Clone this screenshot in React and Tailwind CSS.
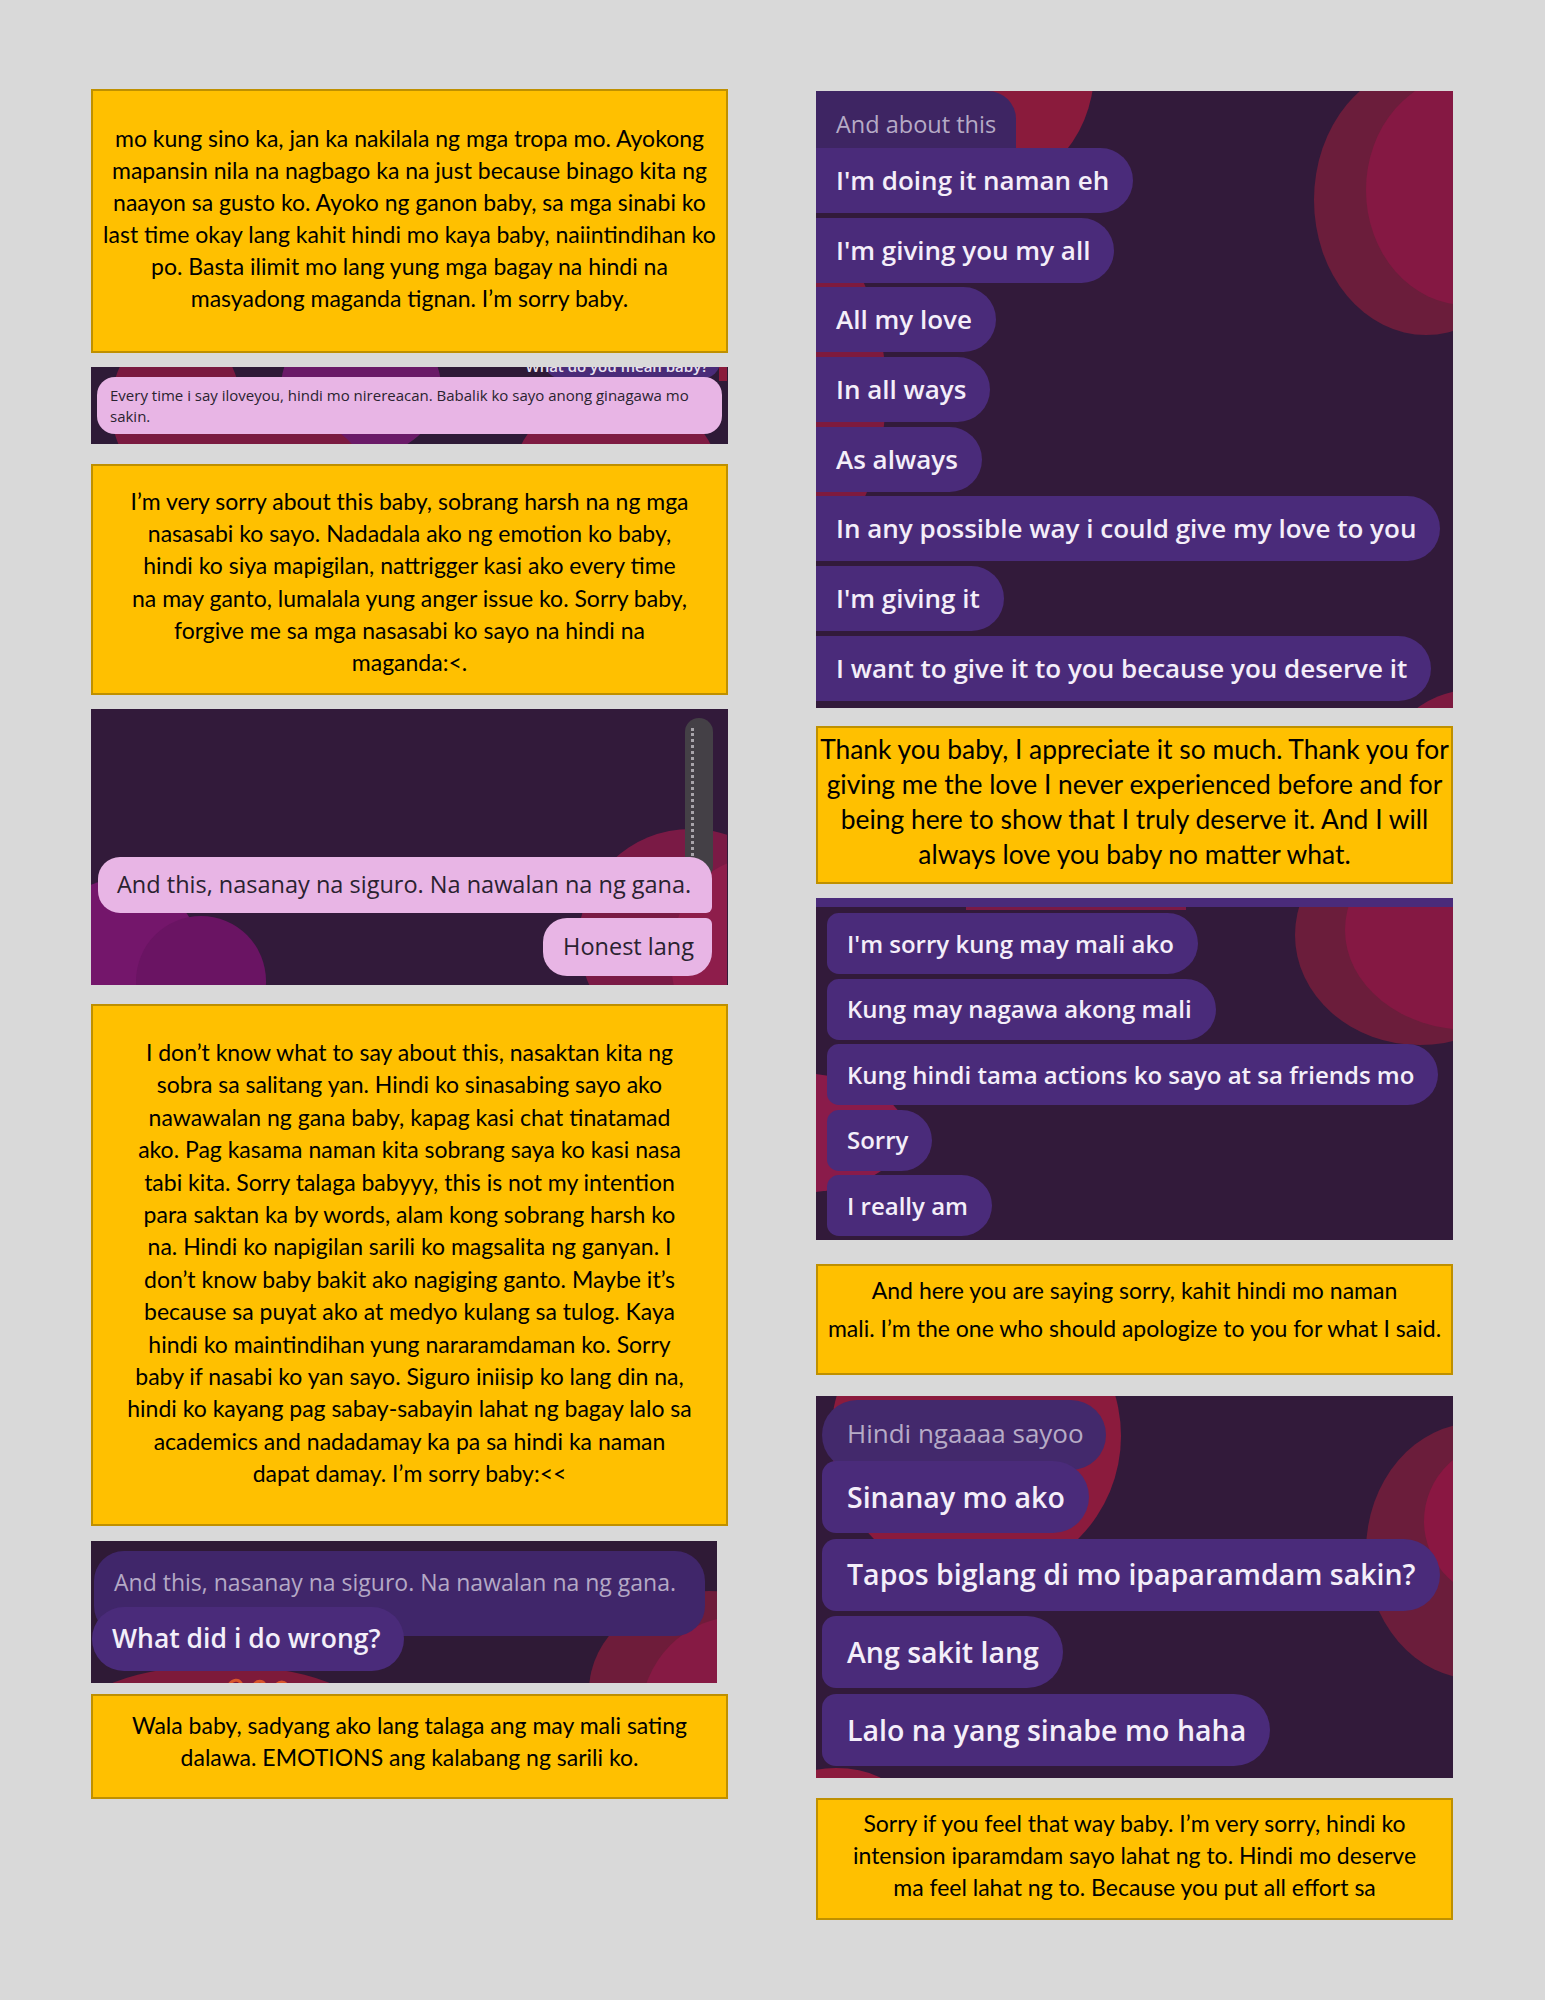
import React from "react";

const box1 = [
  "mo kung sino ka, jan ka nakilala ng mga tropa mo. Ayokong",
  "mapansin nila na nagbago ka na just because binago kita ng",
  "naayon sa gusto ko. Ayoko ng ganon baby, sa mga sinabi ko",
  "last time okay lang kahit hindi mo kaya baby, naiintindihan ko",
  "po. Basta ilimit mo lang yung mga bagay na hindi na",
  "masyadong maganda tignan. I’m sorry baby.",
];
const box2 = [
  "I’m very sorry about this baby, sobrang harsh na ng mga",
  "nasasabi ko sayo. Nadadala ako ng emotion ko baby,",
  "hindi ko siya mapigilan, nattrigger kasi ako every time",
  "na may ganto, lumalala yung anger issue ko. Sorry baby,",
  "forgive me sa mga nasasabi ko sayo na hindi na",
  "maganda:<.",
];
const box3 = [
  "I don’t know what to say about this, nasaktan kita ng",
  "sobra sa salitang yan. Hindi ko sinasabing sayo ako",
  "nawawalan ng gana baby, kapag kasi chat tinatamad",
  "ako. Pag kasama naman kita sobrang saya ko kasi nasa",
  "tabi kita. Sorry talaga babyyy, this is not my intention",
  "para saktan ka by words, alam kong sobrang harsh ko",
  "na. Hindi ko napigilan sarili ko magsalita ng ganyan. I",
  "don’t know baby bakit ako nagiging ganto. Maybe it’s",
  "because sa puyat ako at medyo kulang sa tulog. Kaya",
  "hindi ko maintindihan yung nararamdaman ko. Sorry",
  "baby if nasabi ko yan sayo. Siguro iniisip ko lang din na,",
  "hindi ko kayang pag sabay-sabayin lahat ng bagay lalo sa",
  "academics and nadadamay ka pa sa hindi ka naman",
  "dapat damay. I’m sorry baby:<<",
];
const box4 = [
  "Wala baby, sadyang ako lang talaga ang may mali sating",
  "dalawa. EMOTIONS ang kalabang ng sarili ko.",
];
const boxA = [
  "Thank you baby, I appreciate it so much. Thank you for",
  "giving me the love I never experienced before and for",
  "being here to show that I truly deserve it. And I will",
  "always love you baby no matter what.",
];
const boxB = [
  "And here you are saying sorry, kahit hindi mo naman",
  "mali. I’m the one who should apologize to you for what I said.",
];
const boxC = [
  "Sorry if you feel that way baby. I’m very sorry, hindi ko",
  "intension iparamdam sayo lahat ng to. Hindi mo deserve",
  "ma feel lahat ng to. Because you put all effort sa",
];

function Lines({ lines }) {
  return lines.map((l, i) => (
    <div key={i} className="whitespace-nowrap">
      {l}
    </div>
  ));
}

function Backdrop({ w, h, children }) {
  return (
    <svg
      className="pointer-events-none absolute inset-0"
      width={w}
      height={h}
      viewBox={`0 0 ${w} ${h}`}
      aria-hidden="true"
    >
      {children}
    </svg>
  );
}

const aBubbles = [
  "I'm doing it naman eh",
  "I'm giving you my all",
  "All my love",
  "In all ways",
  "As always",
  "In any possible way i could give my love to you",
  "I'm giving it",
  "I want to give it to you because you deserve it",
];
const bBubbles = [
  "I'm sorry kung may mali ako",
  "Kung may nagawa akong mali",
  "Kung hindi tama actions ko sayo at sa friends mo",
  "Sorry",
  "I really am",
];
const cBubbles = [
  "Sinanay mo ako",
  "Tapos biglang di mo ipaparamdam sakin?",
  "Ang sakit lang",
  "Lalo na yang sinabe mo haha",
];

export default function App() {
  return (
    <div className="min-h-[2000px] bg-[#d9d9d9] font-['Lato',sans-serif] text-black">
      <div className="flex gap-[88px] pl-[91px] pt-[89px]">
        {/* LEFT COLUMN */}
        <div className="flex w-[637px] flex-col">
          <div className="h-[264px] border-2 border-[#bf9000] bg-[#ffc000] pt-[31px] text-center text-[23px] leading-[32px]">
            <Lines lines={box1} />
          </div>

          {/* Screenshot 1 */}
          <div className="relative mt-[14px] h-[77px] overflow-hidden bg-[#2e1a37] font-['Open_Sans',sans-serif]">
            <Backdrop w={636} h={77}>
              <ellipse cx="85" cy="40" rx="65" ry="80" fill="#7a1a40" />
              <ellipse cx="270" cy="20" rx="80" ry="70" fill="#6a1a68" />
              <ellipse cx="150" cy="100" rx="120" ry="60" fill="#7a1a40" />
              <ellipse cx="525" cy="100" rx="100" ry="70" fill="#7e1b42" />
              <rect x="452" y="-30" width="178" height="42" rx="20" fill="#4a2b78" />
              <rect x="628" y="0" width="10" height="14" fill="#8a1b3c" />
            </Backdrop>
            <div className="relative flex h-full flex-col">
              <div className="flex h-[10px] items-end justify-end overflow-hidden pr-[20px] text-[15px] font-semibold leading-[10px] text-[#e9e2ef]">
                <span className="translate-y-[-6px]">What do you mean baby?</span>
              </div>
              <div className="mx-[6px] h-[57px] rounded-[18px] bg-[#e8b5e5] pl-[13px] pt-[8px] text-[15px] leading-[21px] text-[#2a2330]">
                Every time i say iloveyou, hindi mo nirereacan. Babalik ko sayo anong ginagawa mo
                <br />
                sakin.
              </div>
            </div>
          </div>

          <div className="mt-[20px] h-[231px] border-2 border-[#bf9000] bg-[#ffc000] pt-[19px] text-center text-[23px] leading-[32.2px]">
            <Lines lines={box2} />
          </div>

          {/* Screenshot 2 */}
          <div className="relative mt-[14px] h-[276px] overflow-hidden bg-[#321a3a] font-['Open_Sans',sans-serif]">
            <Backdrop w={636} h={276}>
              <circle cx="30" cy="250" r="80" fill="#74166b" />
              <circle cx="110" cy="272" r="65" fill="#6a1463" />
              <ellipse cx="600" cy="230" rx="112" ry="110" fill="#7a1a45" />
              <ellipse cx="660" cy="250" rx="80" ry="100" fill="#8e1d4b" />
            </Backdrop>
            <div className="relative flex h-full flex-col items-end pr-[16px] pt-[9px]">
              <div className="mr-[-1px] flex h-[162px] w-[28px] rounded-full bg-[#444046] pl-[6px] pt-[10px]">
                <div className="h-[140px] w-[4px] border-l-[3px] border-dotted border-[#a8a4aa]" />
              </div>
              <div className="mt-[-23px] flex h-[56px] w-[614px] items-center rounded-[22px] rounded-br-[6px] bg-[#e8b5e5] pl-[19px] text-[23.5px] text-[#2a2230]">
                And this, nasanay na siguro. Na nawalan na ng gana.
              </div>
              <div className="mt-[5px] flex h-[58px] items-center rounded-[24px] rounded-tr-[6px] bg-[#e8b5e5] pl-[20px] pr-[18px] text-[23.5px] text-[#2a2230]">
                Honest lang
              </div>
            </div>
          </div>

          <div className="mt-[19px] h-[522px] border-2 border-[#bf9000] bg-[#ffc000] pt-[30px] text-center text-[23px] leading-[32.4px]">
            <Lines lines={box3} />
          </div>

          {/* Screenshot 3 */}
          <div className="relative mt-[15px] h-[142px] w-[626px] overflow-hidden bg-[#2f1a36] font-['Open_Sans',sans-serif]">
            <Backdrop w={626} h={142}>
              <ellipse cx="130" cy="182" rx="150" ry="58" fill="#7d1a3a" />
              <path
                d="M135 150 C140 136 150 136 152 148 M160 150 C164 137 174 137 176 150 M182 150 C186 138 196 138 198 150"
                stroke="#d8552c"
                strokeWidth="3"
                fill="none"
              />
              <ellipse cx="618" cy="150" rx="120" ry="100" fill="#6e1c3a" />
              <ellipse cx="650" cy="175" rx="100" ry="100" fill="#861a44" />
            </Backdrop>
            <div className="relative flex flex-col">
              <div className="ml-[3px] mt-[10px] h-[85px] w-[611px] rounded-[30px] bg-[#40266a] pl-[20px] pt-[15px] text-[23px] leading-[32px] text-[#b4a9c6]">
                And this, nasanay na siguro. Na nawalan na ng gana.
              </div>
              <div className="ml-[1px] mt-[-29px] flex h-[64px] w-fit items-center rounded-[32px] bg-[#4a2b7a] pl-[20px] pr-[23px] text-[26.5px] font-semibold text-[#f3eef9]">
                What did i do wrong?
              </div>
            </div>
          </div>

          <div className="mt-[11px] h-[105px] border-2 border-[#bf9000] bg-[#ffc000] pt-[13px] text-center text-[23px] leading-[32px]">
            <Lines lines={box4} />
          </div>
        </div>

        {/* RIGHT COLUMN */}
        <div className="flex w-[637px] flex-col pt-[2px]">
          {/* Screenshot A */}
          <div className="relative h-[617px] overflow-hidden bg-[#321a3a] font-['Open_Sans',sans-serif]">
            <Backdrop w={637} h={617}>
              <circle cx="150" cy="-20" r="128" fill="#8a1b3c" />
              <ellipse cx="-40" cy="300" rx="110" ry="180" fill="#7e1a3e" />
              <ellipse cx="610" cy="109" rx="112" ry="135" fill="#6b1d3b" />
              <ellipse cx="650" cy="99" rx="100" ry="115" fill="#851843" />
              <circle cx="660" cy="698" r="100" fill="#7d1a40" />
            </Backdrop>
            <div className="relative flex flex-col">
              <div className="h-[57px] w-fit rounded-tr-[28px] bg-[#3e2563] pl-[20px] pr-[20px] pt-[18px] text-[23.5px] leading-[30px] text-[#b6abc6]">
                And about this
              </div>
              <div className="flex flex-col gap-[4.7px]">
                {aBubbles.map((t) => (
                  <div
                    key={t}
                    className="flex h-[65px] w-fit items-center whitespace-nowrap rounded-r-[33px] bg-[#4a2b7a] pl-[20px] pr-[24px] text-[26px] font-semibold text-[#f4eef9]"
                  >
                    {t}
                  </div>
                ))}
              </div>
            </div>
          </div>

          <div className="mt-[18px] h-[158px] border-2 border-[#bf9000] bg-[#ffc000] pt-[4px] text-center text-[26.4px] leading-[35px]">
            <Lines lines={boxA} />
          </div>

          {/* Screenshot B */}
          <div className="relative mt-[14px] h-[342px] overflow-hidden bg-[#321a3a] font-['Open_Sans',sans-serif]">
            <Backdrop w={637} h={342}>
              <ellipse cx="604" cy="37" rx="125" ry="110" fill="#6b1d3b" />
              <ellipse cx="654" cy="32" rx="125" ry="100" fill="#851843" />
              <ellipse cx="-20" cy="235" rx="110" ry="60" fill="#8a1b4a" />
              <rect x="0" y="0" width="637" height="9" fill="#4a2b7a" />
              <rect x="150" y="9" width="220" height="3" fill="#7a1a45" />
            </Backdrop>
            <div className="relative flex flex-col gap-[4.5px] pl-[11px] pt-[15px]">
              {bBubbles.map((t) => (
                <div
                  key={t}
                  className="flex h-[61px] w-fit items-center whitespace-nowrap rounded-l-[12px] rounded-r-[31px] bg-[#4a2b7a] pl-[20px] pr-[24px] text-[24px] font-semibold text-[#f4eef9]"
                >
                  {t}
                </div>
              ))}
            </div>
          </div>

          <div className="mt-[24px] h-[111px] border-2 border-[#bf9000] bg-[#ffc000] pt-[5px] text-center text-[23px] leading-[38px]">
            <Lines lines={boxB} />
          </div>

          {/* Screenshot C */}
          <div className="relative mt-[21px] h-[382px] overflow-hidden bg-[#321a3a] font-['Open_Sans',sans-serif]">
            <Backdrop w={637} h={382}>
              <circle cx="160" cy="40" r="145" fill="#8b1b3d" />
              <ellipse cx="660" cy="155" rx="110" ry="128" fill="#6b1d3b" />
              <ellipse cx="690" cy="125" rx="82" ry="80" fill="#8a1742" />
              <ellipse cx="20" cy="402" rx="60" ry="30" fill="#8b1b3d" />
            </Backdrop>
            <div className="relative flex flex-col pl-[6px] pt-[4px]">
              <div className="h-[70px] w-fit rounded-[35px] bg-[#43296c] pl-[25px] pr-[22px] pt-[13px] text-[26px] leading-[40px] text-[#b6abc6]">
                Hindi ngaaaa sayoo
              </div>
              <div className="mt-[-9px] flex flex-col gap-[5.7px]">
                {cBubbles.map((t) => (
                  <div
                    key={t}
                    className="flex h-[72px] w-fit items-center whitespace-nowrap rounded-l-[14px] rounded-r-[36px] bg-[#4a2b7a] pl-[25px] pr-[24px] text-[28.5px] font-semibold text-[#f4eef9]"
                  >
                    {t}
                  </div>
                ))}
              </div>
            </div>
          </div>

          <div className="mt-[20px] h-[122px] border-2 border-[#bf9000] bg-[#ffc000] pt-[7px] text-center text-[23px] leading-[32px]">
            <Lines lines={boxC} />
          </div>
        </div>
      </div>
    </div>
  );
}
